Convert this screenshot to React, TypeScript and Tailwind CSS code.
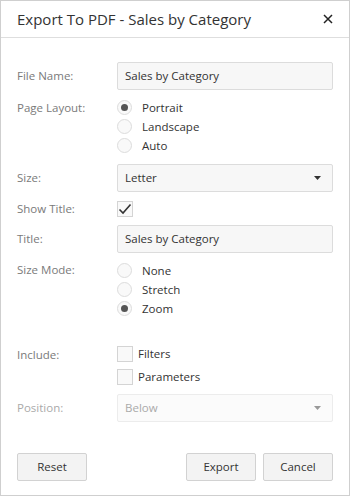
import React, { useState } from 'react';

const font = { fontFamily: '"Open Sans", "Noto Sans", Arial, sans-serif' };

const Radio = ({ label, checked, onClick }: { label: string; checked: boolean; onClick: () => void }) => (
  <div className="flex h-[19px] items-center cursor-pointer" onClick={onClick}>
    <span className="flex h-[15px] w-[15px] items-center justify-center rounded-full border border-[#dcdcdc] bg-[#f9f9f9]">
      {checked && <span className="h-[7px] w-[7px] rounded-full bg-[#555]" />}
    </span>
    <span className="ml-[10px] text-[11.5px] text-[#333]">{label}</span>
  </div>
);

const Check = ({ checked, label, onClick }: { checked: boolean; label?: string; onClick: () => void }) => (
  <div className="flex h-[16px] items-center cursor-pointer" onClick={onClick}>
    <span className="flex h-[16px] w-[16px] items-center justify-center border border-[#d4d4d4] bg-[#f9f9f9]">
      {checked && (
        <svg width="14" height="12" viewBox="0 0 14 12">
          <path d="M1.5 6.5 L5 10 L12.5 1.5" fill="none" stroke="#333" strokeWidth="1.6" />
        </svg>
      )}
    </span>
    {label && <span className="ml-[5px] text-[11.5px] text-[#333]">{label}</span>}
  </div>
);

const Caret = ({ color }: { color: string }) => (
  <svg width="7" height="4" viewBox="0 0 7 4">
    <path d="M0 0 H7 L3.5 4 Z" fill={color} />
  </svg>
);

const Label = ({ children, dim }: { children: React.ReactNode; dim?: boolean }) => (
  <div className={`w-[100px] shrink-0 text-[11.5px] ${dim ? 'text-[#aaa]' : 'text-[#7a7a7a]'}`}>{children}</div>
);

export default function App() {
  const [layout, setLayout] = useState('Portrait');
  const [mode, setMode] = useState('Zoom');
  const [showTitle, setShowTitle] = useState(true);
  const [filters, setFilters] = useState(false);
  const [params, setParams] = useState(false);

  return (
    <div style={font} className="flex h-[496px] w-[350px] flex-col border border-[#cfcfcf] bg-white">
      <div className="flex h-[37px] shrink-0 items-center justify-between border-b border-[#dedede] pl-[16px] pr-[16px]">
        <span className="text-[15px] text-[#333]">Export To PDF - Sales by Category</span>
        <svg width="10" height="10" viewBox="0 0 10 10">
          <path d="M1 1 L9 9 M9 1 L1 9" stroke="#222" strokeWidth="1.5" />
        </svg>
      </div>

      <div className="flex flex-col px-[16px] pt-[24px]">
        <div className="flex items-center">
          <Label>File Name:</Label>
          <div className="flex h-[28px] flex-1 items-center rounded-[2px] border border-[#dcdcdc] bg-[#f7f7f7] px-[7px] text-[11.5px] text-[#333]">
            Sales by Category
          </div>
        </div>

        <div className="mt-[8px] flex items-start">
          <div className="pt-[1px]"><Label>Page Layout:</Label></div>
          <div className="flex flex-col">
            {['Portrait', 'Landscape', 'Auto'].map((l) => (
              <Radio key={l} label={l} checked={layout === l} onClick={() => setLayout(l)} />
            ))}
          </div>
        </div>

        <div className="mt-[9px] flex items-center">
          <Label>Size:</Label>
          <div className="flex h-[28px] flex-1 items-center justify-between rounded-[2px] border border-[#dcdcdc] bg-[#f7f7f7] pl-[7px] pr-[11px] text-[11.5px] text-[#333]">
            Letter
            <Caret color="#333" />
          </div>
        </div>

        <div className="mt-[8px] flex h-[17px] items-center">
          <Label>Show Title:</Label>
          <Check checked={showTitle} onClick={() => setShowTitle(!showTitle)} />
        </div>

        <div className="mt-[8px] flex items-center">
          <Label>Title:</Label>
          <div className="flex h-[28px] flex-1 items-center rounded-[2px] border border-[#dcdcdc] bg-[#f7f7f7] px-[7px] text-[11.5px] text-[#333]">
            Sales by Category
          </div>
        </div>

        <div className="mt-[8px] flex items-start">
          <Label>Size Mode:</Label>
          <div className="flex flex-col">
            {['None', 'Stretch', 'Zoom'].map((l) => (
              <Radio key={l} label={l} checked={mode === l} onClick={() => setMode(l)} />
            ))}
          </div>
        </div>

        <div className="mt-[28px] flex items-start">
          <Label>Include:</Label>
          <div className="flex flex-col gap-[7px]">
            <Check checked={filters} label="Filters" onClick={() => setFilters(!filters)} />
            <Check checked={params} label="Parameters" onClick={() => setParams(!params)} />
          </div>
        </div>

        <div className="mt-[9px] flex items-center">
          <Label dim>Position:</Label>
          <div className="flex h-[28px] flex-1 items-center justify-between rounded-[2px] border border-[#ececec] bg-[#fbfbfb] pl-[7px] pr-[11px] text-[11.5px] text-[#aaa]">
            Below
            <Caret color="#999" />
          </div>
        </div>

        <div className="mt-[31px] flex items-center">
          <button className="h-[28px] w-[70px] rounded-[2px] border border-[#d2d2d2] bg-[#f3f3f3] text-[11.5px] text-[#333]">Reset</button>
          <div className="flex-1" />
          <button className="h-[28px] w-[70px] rounded-[2px] border border-[#d2d2d2] bg-[#f3f3f3] text-[11.5px] text-[#333]">Export</button>
          <button className="ml-[7px] h-[28px] w-[70px] rounded-[2px] border border-[#d2d2d2] bg-[#f3f3f3] text-[11.5px] text-[#333]">Cancel</button>
        </div>
      </div>
    </div>
  );
}
